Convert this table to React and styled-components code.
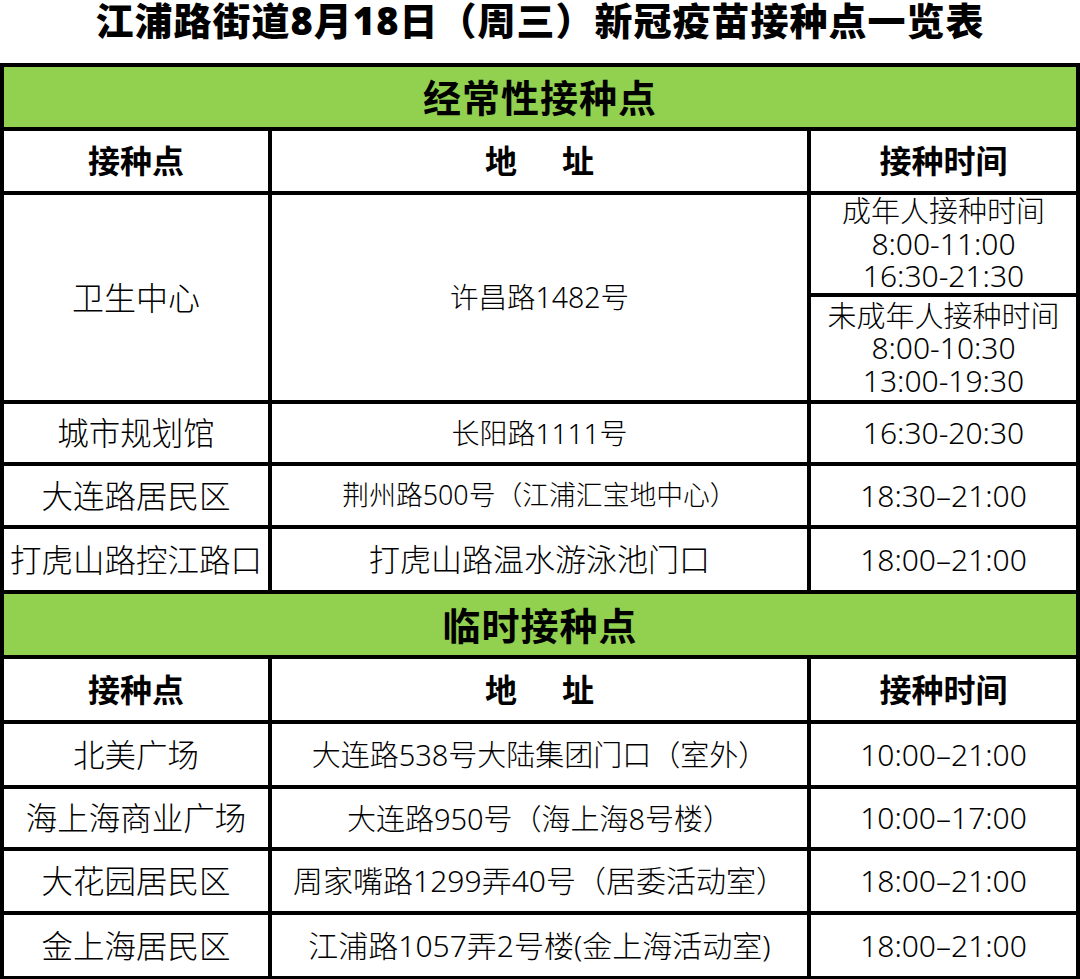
import React from "react";
import styled, { createGlobalStyle } from "styled-components";

const GlobalStyle = createGlobalStyle`
  html, body {
    margin: 0;
    padding: 0;
    background: #ffffff;
  }
  body {
    font-family: "Noto Sans", "Noto Sans CJK SC", sans-serif;
    color: #000;
  }
`;

const Page = styled.div`
  width: 1080px;
  height: 979px;
  overflow: hidden;
`;

const TitleBar = styled.div`
  height: 63px;
  display: flex;
  justify-content: center;
`;

const Title = styled.h1`
  margin: 0;
  padding-top: 1px;
  font-size: 38px;
  line-height: 38px;
  font-weight: 900;
  letter-spacing: 1px;
  white-space: nowrap;
`;

const Table = styled.div`
  display: grid;
  grid-template-columns: 264px 535px 265px;
  grid-template-rows: 60px 60px 205px 58px 59px 61px 61px 61px 61px 58px 60px 61px;
  gap: 4px;
  padding: 4px 4px 3px 4px;
  background: #000;
`;

const SectionBar = styled.div`
  grid-column: 1 / -1;
  background: #92d050;
  display: flex;
  align-items: center;
  justify-content: center;
  font-size: 38px;
  font-weight: 700;
  letter-spacing: 1px;
  line-height: 1;
`;

const HeadCell = styled.div`
  background: #fff;
  display: flex;
  align-items: center;
  justify-content: center;
  font-size: 32px;
  font-weight: 700;
  line-height: 1;
  white-space: nowrap;
`;

const Spread = styled.span`
  display: inline-flex;
  gap: 45px;
`;

const Cell = styled.div`
  background: #fff;
  display: flex;
  align-items: center;
  justify-content: center;
  font-size: ${(p) => p.$size || 30}px;
  font-weight: 300;
  line-height: 1;
  white-space: nowrap;
`;

const TimeStack = styled.div`
  display: flex;
  flex-direction: column;
  gap: 4px;
  background: #000;
`;

const SubCell = styled.div`
  background: #fff;
  display: flex;
  flex-direction: column;
  align-items: center;
  justify-content: center;
  height: ${(p) => (p.$h ? `${p.$h}px` : "auto")};
  flex: ${(p) => (p.$h ? "none" : "1")};
  font-weight: 300;
  line-height: 32.5px;
  white-space: nowrap;
`;

const SubLabel = styled.span`
  font-size: 29px;
`;

const SubTime = styled.span`
  font-size: 30px;
`;

const regular = [
  ["城市规划馆", "长阳路1111号", "16:30-20:30", 28],
  ["大连路居民区", "荆州路500号（江浦汇宝地中心）", "18:30–21:00", 26.8],
  ["打虎山路控江路口", "打虎山路温水游泳池门口", "18:00–21:00", 31],
];

const temporary = [
  ["北美广场", "大连路538号大陆集团门口（室外）", "10:00–21:00", 29],
  ["海上海商业广场", "大连路950号（海上海8号楼）", "10:00–17:00", 29],
  ["大花园居民区", "周家嘴路1299弄40号（居委活动室）", "18:00–21:00", 30],
  ["金上海居民区", "江浦路1057弄2号楼(金上海活动室)", "18:00–21:00", 30],
];

function Header() {
  return (
    <>
      <HeadCell>接种点</HeadCell>
      <HeadCell>
        <Spread>
          <span>地</span>
          <span>址</span>
        </Spread>
      </HeadCell>
      <HeadCell>接种时间</HeadCell>
    </>
  );
}

function Row({ place, addr, time, addrSize }) {
  return (
    <>
      <Cell $size={31.5}>{place}</Cell>
      <Cell $size={addrSize}>{addr}</Cell>
      <Cell $size={30}>{time}</Cell>
    </>
  );
}

export default function App() {
  return (
    <>
      <GlobalStyle />
      <Page>
        <TitleBar>
          <Title>江浦路街道8月18日（周三）新冠疫苗接种点一览表</Title>
        </TitleBar>
        <Table>
          <SectionBar>经常性接种点</SectionBar>
          <Header />
          <Cell $size={32}>卫生中心</Cell>
          <Cell $size={28.5}>许昌路1482号</Cell>
          <TimeStack>
            <SubCell $h={98}>
              <SubLabel>成年人接种时间</SubLabel>
              <SubTime>8:00-11:00</SubTime>
              <SubTime>16:30-21:30</SubTime>
            </SubCell>
            <SubCell>
              <SubLabel>未成年人接种时间</SubLabel>
              <SubTime>8:00-10:30</SubTime>
              <SubTime>13:00-19:30</SubTime>
            </SubCell>
          </TimeStack>
          {regular.map(([p, a, t, s]) => (
            <Row key={p} place={p} addr={a} time={t} addrSize={s} />
          ))}
          <SectionBar>临时接种点</SectionBar>
          <Header />
          {temporary.map(([p, a, t, s]) => (
            <Row key={p} place={p} addr={a} time={t} addrSize={s} />
          ))}
        </Table>
      </Page>
    </>
  );
}
